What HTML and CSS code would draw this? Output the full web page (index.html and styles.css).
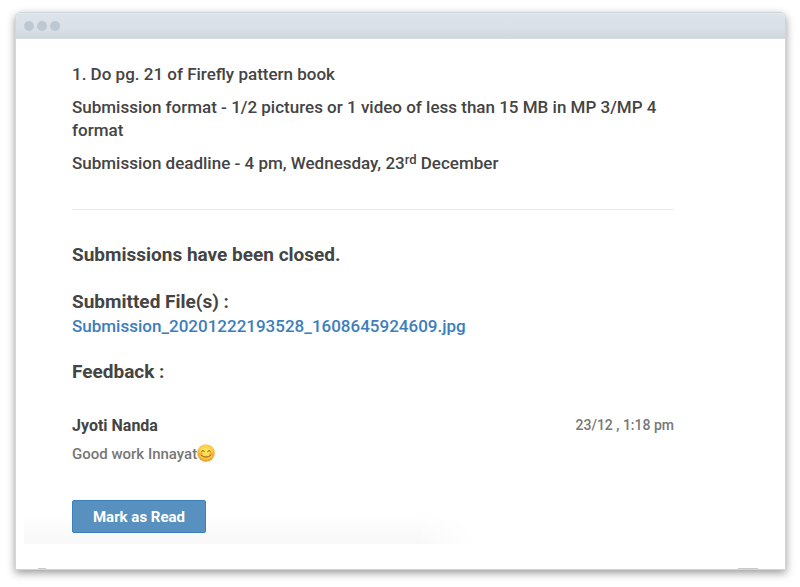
FILE: index.html
```html
<!DOCTYPE html>
<html lang="en">
<head>
<meta charset="utf-8">
<meta name="viewport" content="width=device-width, initial-scale=1">
<title>Submission feedback</title>
<link rel="stylesheet" href="styles.css">
</head>
<body>
<div class="window">
  <header class="titlebar">
    <span class="dot"></span><span class="dot"></span><span class="dot"></span>
  </header>
  <main class="content">
    <section class="task">
      <p>1. Do pg. 21 of Firefly pattern book</p>
      <p>Submission format - 1/2 pictures or 1 video of less than 15 MB in MP 3/MP 4 format</p>
      <p>Submission deadline - 4 pm, Wednesday, 23<sup>rd</sup> December</p>
    </section>
    <hr class="divider">
    <h2 class="heading">Submissions have been closed.</h2>
    <section class="files">
      <h2 class="heading">Submitted File(s) :</h2>
      <a class="file" href="#">Submission_20201222193528_1608645924609.jpg</a>
    </section>
    <h2 class="heading">Feedback :</h2>
    <article class="comment">
      <div class="meta">
        <h3 class="author">Jyoti Nanda</h3>
        <time class="time">23/12 , 1:18 pm</time>
      </div>
      <p class="message">Good work Innayat<svg class="emoji" viewBox="0 0 36 36" role="img" aria-label="Smiling face">
        <defs>
          <radialGradient id="face" cx="50%" cy="42%" r="56%">
            <stop offset="0" stop-color="#ffe965"/>
            <stop offset=".65" stop-color="#fdcf48"/>
            <stop offset="1" stop-color="#eb9b26"/>
          </radialGradient>
        </defs>
        <circle cx="18" cy="18" r="17.5" fill="url(#face)"/>
        <ellipse cx="7.5" cy="20" rx="4.5" ry="3" fill="#f58a35" opacity=".55"/>
        <ellipse cx="28.5" cy="20" rx="4.5" ry="3" fill="#f58a35" opacity=".55"/>
        <path d="M9 15q3-4.500 6 0M21 15q3-4.500 6 0M9 23q9 7 18 0" fill="none" stroke="#8a5518" stroke-width="2" stroke-linecap="round"/>
      </svg></p>
    </article>
  </main>
  <footer class="actions">
    <button class="button" type="button">Mark as Read</button>
  </footer>
</div>
</body>
</html>
```
FILE: styles.css
```css
* {
  box-sizing: border-box;
}

body {
  margin: 0;
  padding: 12px 14px 16px 15px;
  background: #fff;
  color: #444;
  font-family: Roboto, "Liberation Sans", sans-serif;
  font-size: 17px;
  line-height: 23px;
}

p, h2, h3 {
  margin: 0;
}

.window {
  padding-bottom: 25px;
  border: 1px solid #cdd6dc;
  border-radius: 6px 6px 0 0;
  /* faint specks along the bottom edge */
  background:
    linear-gradient(#c8ccce, #c8ccce) left 22px bottom / 8px 1px no-repeat,
    linear-gradient(#c8ccce, #c8ccce) right 27px bottom / 20px 1px no-repeat,
    #fff;
  box-shadow: 0 3px 8px rgba(0, 0, 0, 0.4);
}

.titlebar {
  display: flex;
  align-items: center;
  gap: 3px;
  height: 26px;
  padding-left: 8px;
  border-top: 1px solid #e3eaed;
  border-bottom: 1px solid #d3dce2;
  border-radius: 5px 5px 0 0;
  background: linear-gradient(#dde3ea, #dae0e7 60%, #cfd8df);
}

.dot {
  width: 10px;
  height: 10px;
  border-radius: 50%;
  background: #bdc8d2;
}

.content {
  padding: 24px 111px 0 56px;
}

.task {
  display: flex;
  flex-direction: column;
  gap: 10px;
  font-weight: 500;
}

sup {
  font-size: 13px;
  line-height: 0;
  vertical-align: 5px;
}

.divider {
  height: 1px;
  margin: 34px 0 33px;
  border: 0;
  background: #eaeaea;
}

.heading {
  font-size: 19px;
  font-weight: 700;
  line-height: 24px;
}

.files {
  margin: 23px 0 22px;
}

.file {
  color: #3d7dbc;
  font-weight: 500;
  line-height: 24px;
  text-decoration: none;
}

.comment {
  margin-top: 30px;
}

.meta {
  display: flex;
  align-items: center;
  justify-content: space-between;
}

.author {
  font-size: 16px;
  font-weight: 700;
}

.time,
.message {
  color: #777;
  font-weight: 500;
}

.time {
  font-size: 14px;
}

.message {
  margin-top: 6px;
  font-size: 15px;
}

.emoji {
  width: 18px;
  height: 18px;
  vertical-align: -3px;
}

.actions {
  width: 60%;
  margin: 34px 0 0 8px;
  padding: 0 0 11px 48px;
  background:
    linear-gradient(to right, transparent 85%, #fff 98%),
    linear-gradient(transparent 30%, #f8f8f8);
}

.button {
  width: 134px;
  height: 33px;
  padding: 0;
  border: 1px solid #3d80bf;
  border-radius: 2px;
  background: #5890c0;
  color: #fff;
  font: 700 15px/20px Roboto, "Liberation Sans", sans-serif;
}
```
